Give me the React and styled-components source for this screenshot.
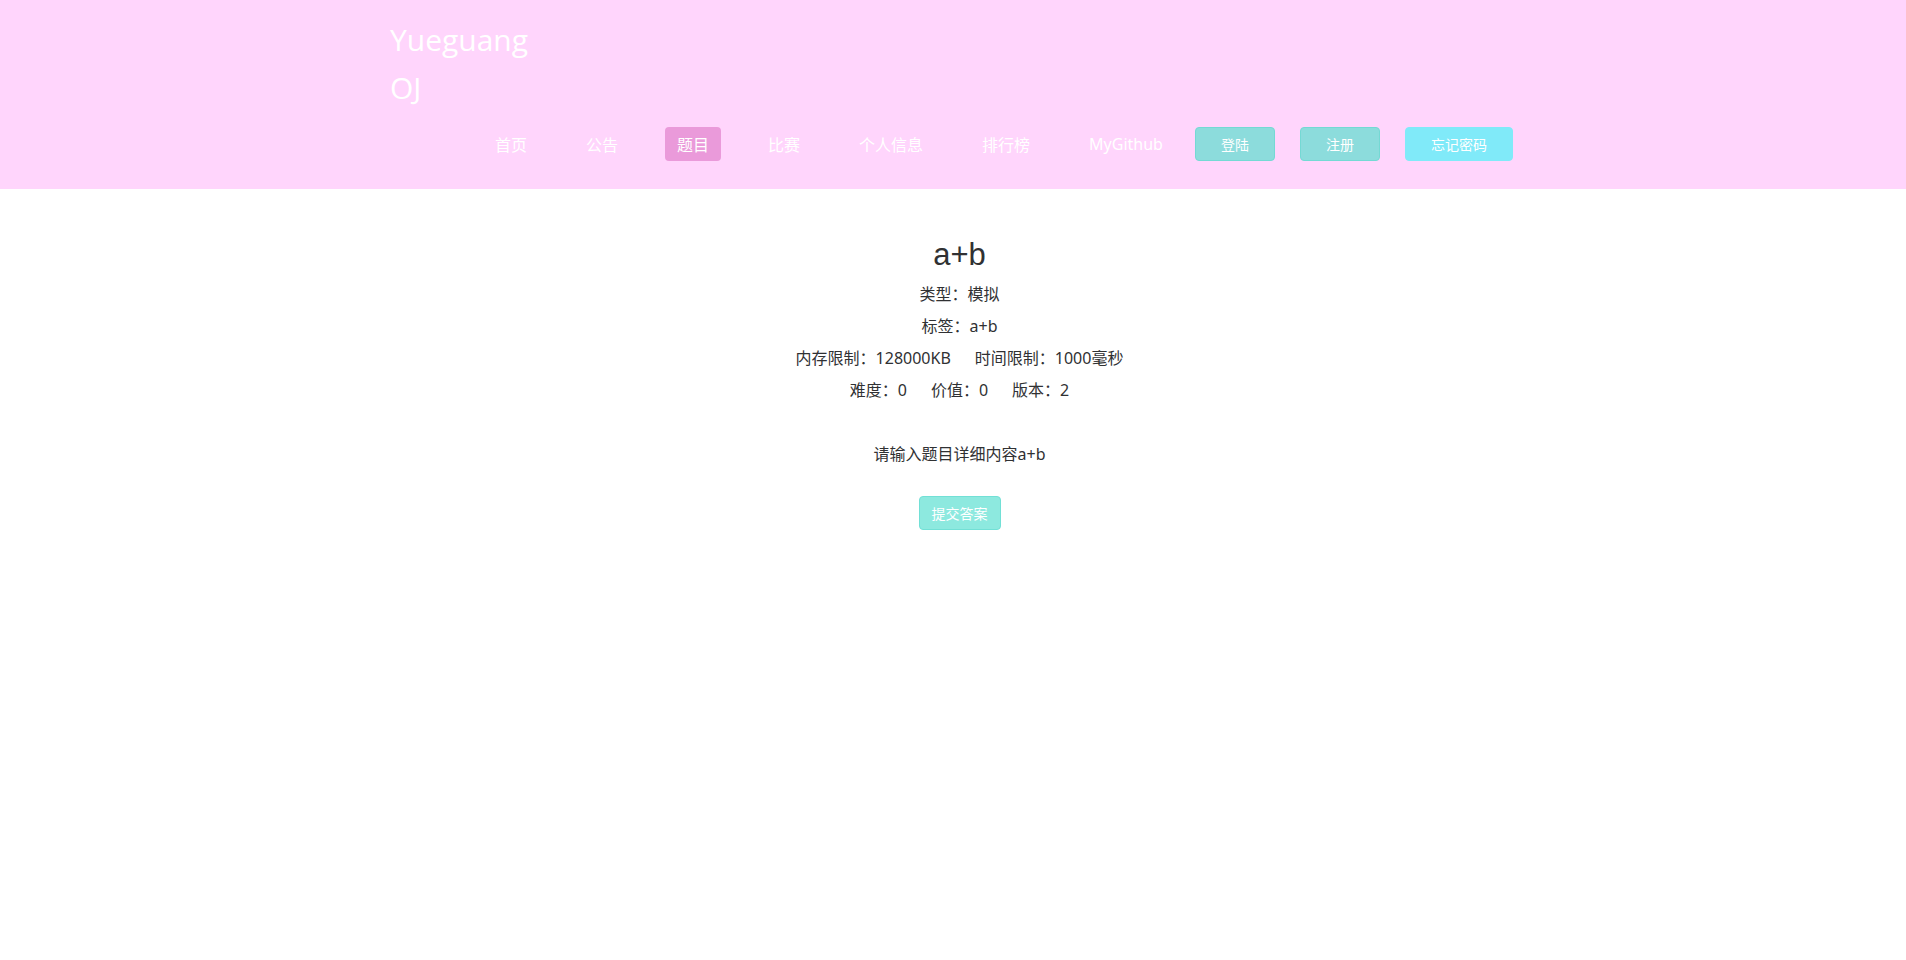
import React from "react";
import styled, { createGlobalStyle } from "styled-components";

const Global = createGlobalStyle`
  html, body { margin: 0; padding: 0; background: #ffffff; }
  body { font-family: "Noto Sans", "Noto Sans CJK SC", sans-serif; color: #303133; }
  * { box-sizing: border-box; }
`;

const Header = styled.header`
  background: #ffd5fc;
  height: 189px;
`;

const HeaderInner = styled.div`
  width: 1126px;
  margin: 0 auto;
  padding-top: 16px;
  display: flex;
  flex-direction: column;
`;

const Logo = styled.div`
  width: 160px;
  font-family: "Open Sans", "Noto Sans CJK SC", sans-serif;
  font-size: 30px;
  line-height: 48px;
  color: #ffffff;
`;

const Nav = styled.nav`
  display: flex;
  align-items: center;
  margin-top: 15px;
  margin-left: 93px;
  height: 34px;
`;

const NavItem = styled.a`
  display: flex;
  align-items: center;
  height: 34px;
  padding: 0 12px;
  margin-right: 35px;
  border-radius: 4px;
  font-family: "Noto Sans", "Noto Sans CJK SC", sans-serif;
  font-size: 16px;
  color: #ffffff;
  background: ${(p) => (p.$active ? "#ea9ada" : "transparent")};
  cursor: pointer;
  &:last-of-type { margin-right: 0; }
`;

const NavButton = styled.button`
  height: 34px;
  padding: 0 25px;
  margin-left: ${(p) => p.$gap}px;
  border-radius: 4px;
  border: 1px solid ${(p) => (p.$light ? "#80eaf9" : "#74d9d4")};
  background: ${(p) => (p.$light ? "#80eaf9" : "#8cdcdc")};
  color: #ffffff;
  font-family: "Noto Sans CJK SC", sans-serif;
  font-size: 14px;
  cursor: pointer;
`;

const Main = styled.main`
  display: flex;
  flex-direction: column;
  align-items: center;
  padding-top: 45px;
  padding-left: 13px;
`;

const Title = styled.h2`
  margin: 0 0 2px;
  font-family: "Liberation Sans", "Noto Sans CJK SC", sans-serif;
  font-weight: 400;
  font-size: 31px;
  line-height: 42px;
  color: #303133;
`;

const InfoRow = styled.div`
  display: flex;
  gap: 24px;
  font-size: 16px;
  line-height: 32px;
  color: #303133;
`;

const Description = styled.p`
  margin: 32px 0 0;
  font-size: 16px;
  line-height: 32px;
  color: #303133;
`;

const SubmitButton = styled.button`
  margin-top: 26px;
  height: 34px;
  padding: 0 12px;
  border-radius: 4px;
  border: 1px solid #72e0d6;
  background: #8de9df;
  color: #ffffff;
  font-family: "Noto Sans CJK SC", sans-serif;
  font-size: 14px;
  cursor: pointer;
`;

const navItems = ["首页", "公告", "题目", "比赛", "个人信息", "排行榜", "MyGithub"];

export default function App() {
  return (
    <>
      <Global />
      <Header>
        <HeaderInner>
          <Logo>Yueguang OJ</Logo>
          <Nav>
            {navItems.map((n) => (
              <NavItem key={n} $active={n === "题目"}>
                {n}
              </NavItem>
            ))}
            <NavButton $gap={20}>登陆</NavButton>
            <NavButton $gap={25}>注册</NavButton>
            <NavButton $gap={25} $light>
              忘记密码
            </NavButton>
          </Nav>
        </HeaderInner>
      </Header>
      <Main>
        <Title>a+b</Title>
        <InfoRow>
          <span>类型：模拟</span>
        </InfoRow>
        <InfoRow>
          <span>标签：a+b</span>
        </InfoRow>
        <InfoRow>
          <span>内存限制：128000KB</span>
          <span>时间限制：1000毫秒</span>
        </InfoRow>
        <InfoRow>
          <span>难度：0</span>
          <span>价值：0</span>
          <span>版本：2</span>
        </InfoRow>
        <Description>请输入题目详细内容a+b</Description>
        <SubmitButton>提交答案</SubmitButton>
      </Main>
    </>
  );
}
